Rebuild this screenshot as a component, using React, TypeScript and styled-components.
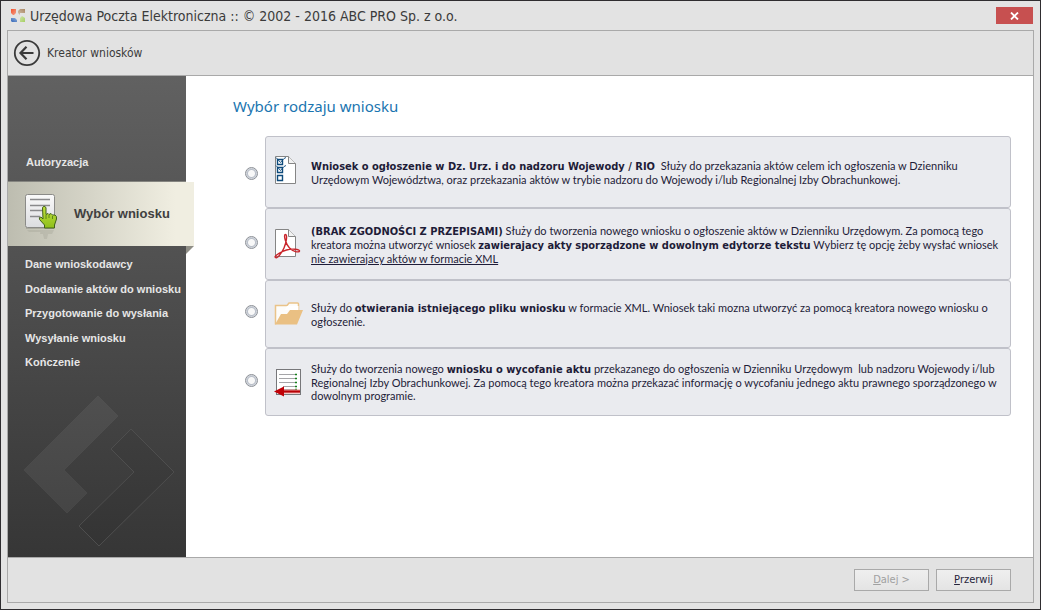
import React, { useState } from "react";
import type { ReactNode } from "react";
import styled, { createGlobalStyle } from "styled-components";

const ui = `"DejaVu Sans Condensed", Tahoma, sans-serif`;

const GlobalStyle = createGlobalStyle`
  * { box-sizing: border-box; }
  html, body, #root { height: 100%; margin: 0; }
  body { font-family: ${ui}; color: #3b3b3b; background: #e3e3e3; }
`;

const Window = styled.div`
  display: flex;
  flex-direction: column;
  min-height: 100%;
  padding: 0 6px 6px;
  border: 1px solid #2f2d30;
  background: #e3e3e3;
`;

const TitleBar = styled.header`
  display: flex;
  align-items: center;
  gap: 5px;
  height: 29px;
  padding-left: 4px;
`;

const WindowTitle = styled.h1`
  flex: 1;
  margin: 0;
  font-size: 14px;
  font-weight: normal;
  line-height: 20px;
`;

const CloseButton = styled.button`
  display: flex;
  align-items: center;
  justify-content: center;
  width: 37px;
  height: 17px;
  margin-right: 1px;
  padding: 0;
  border: 0;
  background: #c75050;
`;

const Frame = styled.div`
  display: flex;
  flex: 1;
  flex-direction: column;
  border: 1px solid #a9a9a9;
`;

const WizardHeader = styled.div`
  display: flex;
  align-items: center;
  gap: 6px;
  height: 45px;
  padding-left: 5px;
  border-bottom: 1px solid #a9a9a9;
  background: #e2e2e2;
  font-size: 12px;
`;

const BackButton = styled.button`
  width: 28px;
  height: 28px;
  padding: 0;
  border: 0;
  background: none;
  svg { display: block; }
`;

const Body = styled.div`
  display: flex;
  flex: 1;
  background: #fff;
`;

const Sidebar = styled.nav`
  position: relative;
  display: flex;
  flex-direction: column;
  flex: none;
  width: 178px;
  background: linear-gradient(#616161, #363636);
  color: #e6e6e6;
  font: bold 11px/14px "Liberation Sans", Arial, sans-serif;
`;

const DoneStep = styled.div`
  height: 106px;
  padding: 79px 0 0 18px;
  border-bottom: 1px solid #858580;
`;

const ActiveStep = styled.div`
  position: relative;
  display: flex;
  align-items: center;
  gap: 10px;
  width: 186px;
  height: 64px;
  padding-left: 16px;
  background: linear-gradient(90deg, #bdbdb0, #d6d5c8 45%, #f0eee1 90%);
  color: #404040;
  font-size: 13px;

  &::after {
    content: "";
    position: absolute;
    top: 100%;
    right: 0;
    border-top: 8px solid #8f8e86;
    border-right: 8px solid transparent;
  }
`;

const Steps = styled.ul`
  display: flex;
  flex-direction: column;
  justify-content: space-between;
  height: 112px;
  margin: 11px 0 0;
  padding: 0 0 0 17px;
  list-style: none;
  white-space: nowrap;
`;

const Watermark = styled.svg`
  margin: 26px 0 10px 15px;
`;

const Main = styled.main`
  flex: 1;
  padding: 20px 22px 0 47px;
`;

const Heading = styled.h2`
  margin: 0 0 20px;
  color: #1a75b0;
  font: normal 15px/20px "Noto Sans", "Segoe UI", sans-serif;
`;

const Choices = styled.div`
  display: flex;
`;

const Radios = styled.div`
  display: flex;
  flex-direction: column;
  flex: none;
  gap: 56px;
  width: 32px;
  padding: 31px 0 0 12px;
`;

const Radio = styled.input`
  appearance: none;
  width: 13px;
  height: 13px;
  margin: 0;
  border: 1px solid #8d9197;
  border-radius: 50%;
  background: radial-gradient(#f8f8f8 0 3px, #b9bfc9 4px, #e8eaee 6px);
  &:checked { background: radial-gradient(#245b88 0 3px, #b9bfc9 4px, #e8eaee 6px); }
`;

const Cards = styled.div`
  flex: 1;
`;

const Card = styled.label<{ $compact?: boolean }>`
  display: flex;
  align-items: center;
  gap: 5px;
  min-height: ${(p) => (p.$compact ? 68 : 72)}px;
  padding-left: 8px;
  border: 1px solid #c0c1c9;
  border-radius: 3px;
  background: #eaebef;
  color: #1e1c38;
  font: 11px/13px Lato, Tahoma, sans-serif;

  svg { flex: none; }
  strong { font-family: ${ui}; }
`;

const Footer = styled.footer`
  display: flex;
  align-items: center;
  justify-content: flex-end;
  gap: 7px;
  height: 45px;
  padding-right: 22px;
  border-top: 1px solid #a9a9a9;
  background: #e2e2e2;
`;

const FooterButton = styled.button`
  width: 75px;
  height: 22px;
  padding: 0;
  border: 1px solid #a9a9a9;
  background: linear-gradient(#efefef, #e4e4e4);
  color: #26243a;
  font: 11px/20px ${ui};
  &:disabled { color: #a0a0a0; }
`;

const AppLogo = () => (
  <svg width="14" height="14" viewBox="0 0 14 14" aria-hidden="true">
    <defs>
      <linearGradient id="lr" x2="1" y2="1"><stop stopColor="#f4502c" /><stop offset="1" stopColor="#f2a088" /></linearGradient>
      <linearGradient id="lt" x1="1" x2="0" y2="1"><stop stopColor="#a98662" /><stop offset="1" stopColor="#d3c2ae" /></linearGradient>
      <linearGradient id="lb" y1="1" x2="1" y2="0"><stop stopColor="#3467b8" /><stop offset="1" stopColor="#8fadd9" /></linearGradient>
      <linearGradient id="lg" x1="1" y1="1" x2="0" y2="0"><stop stopColor="#a5cf62" /><stop offset="1" stopColor="#cfe3a8" /></linearGradient>
    </defs>
    <path d="M0 0h5v4L3 6H2L0 4z" fill="url(#lr)" />
    <path d="M7 2l2-2h5v4H9v2L7 4z" fill="url(#lt)" />
    <path d="M0 9h4l2 2v2H1L0 12z" fill="url(#lb)" />
    <path d="M9 9l2-2 3 2v4H9z" fill="url(#lg)" />
  </svg>
);

const ActiveIcon = () => (
  <svg width="40" height="52" viewBox="0 0 40 52" aria-hidden="true">
    <defs>
      <linearGradient id="paper" x2="0" y2="1"><stop stopColor="#fafafa" /><stop offset="1" stopColor="#dcdde0" /></linearGradient>
      <linearGradient id="hand" x2="0" y2="1"><stop stopColor="#bfe03c" /><stop offset="1" stopColor="#8fbf1c" /></linearGradient>
    </defs>
    <path d="M2 41h28v-2H2z" fill="#85857a" opacity=".4" />
    <path d="M3 42h24l-2 2H5zM17 42h13l-2 4h-4l-1 5h-3l-1-5h-3z" fill="#8d8d80" opacity=".22" />
    <rect x="1.500" y="6.500" width="29" height="33" rx="2" fill="url(#paper)" stroke="#8b8b88" />
    <path d="M6 11.500h20M6 17.500h20M6 22.500h14M6 28.500h10" stroke="#8a8a8c" strokeWidth="1.500" />
    <path
      d="M18.500 19.500q1.500-2.500 3.500 0v7l2-1 1 1 2-1 1.500 1.500h2.500q2 1 1.500 4l-2 6v3H20.500v-3l-5-5.500q-1-2.500 1.500-2.500l2 2z"
      fill="url(#hand)" stroke="#40601a" strokeLinejoin="round"
    />
    <path d="M22 27v4M25 27v3M28.500 28v3" stroke="#5d8418" />
  </svg>
);

const ChecklistIcon = () => (
  <svg width="32" height="32" viewBox="0 0 32 32" aria-hidden="true">
    <path d="M1.500.500h13l7 7v20h-20z" fill="#fff" stroke="#858585" />
    <path d="M14.500.500v7h7" fill="#f2f2f2" stroke="#858585" />
    <g fill="#fff" stroke="#0e4a7b">
      <path d="M3.500 3.500h5v5h-5zM3.500 11.500h5v5h-5zM3.500 19.500h5v5h-5z" strokeWidth="1.400" />
      <path d="M2 1.500l4.500 5L10 2.500l2-1M2 9.500l4.500 5 3.500-4 2-1" fill="none" strokeWidth=".9" />
    </g>
  </svg>
);

const PdfIcon = () => (
  <svg width="32" height="32" viewBox="0 0 32 32" aria-hidden="true">
    <path d="M1.500 1.500h13l7 7v20h-20z" fill="#fff" stroke="#858585" />
    <path d="M14.500 1.500v7h7" fill="#f2f2f2" stroke="#858585" />
    <path
      d="M11.500 6.500c-2.500 0 .500 10 4 13.500s9.500 5 10 3-8-2.500-13-1S1.500 27 1 29c1.500 3 6.500-3.500 9-9s3.500-13.500 1.500-13.500z"
      fill="none" stroke="#c9252b" strokeWidth="1.400" strokeLinejoin="round"
    />
  </svg>
);

const FolderIcon = () => (
  <svg width="32" height="32" viewBox="0 0 32 32" aria-hidden="true">
    <path d="M1.500 26.500v-19H13l2-2.500h8.500q1 0 1 1v6" fill="#fdfcfa" stroke="#eac389" strokeWidth="1.500" />
    <path d="M24.500 12V8H13l-2 4z" fill="#fff" />
    <path d="M1 26.500L7 16h6l3-4h13l-6 14.500z" fill="#eac083" />
  </svg>
);

const WithdrawIcon = () => (
  <svg width="32" height="32" viewBox="0 0 32 32" aria-hidden="true">
    <rect x="2.500" y="3.500" width="24" height="25" fill="#fff" stroke="#77777a" />
    <path d="M5 8.500h16M5 12.500h16M5 16.500h16M9 20.500h12M9 23.500h12" stroke="#a5a5a8" />
    <path d="M21 8.500h2M21 12.500h2M21 16.500h2M21 20.500h2M21 23.500h2" stroke="#16801c" strokeWidth="1.300" />
    <path d="M8 25.500h18" stroke="#e89494" strokeWidth="4" />
    <path d="M9 25.500h17" stroke="#b80006" strokeWidth="2" />
    <path d="M0 25.500l10-5v10z" fill="#c00006" />
  </svg>
);

const options: { id: string; compact?: boolean; icon: ReactNode; text: ReactNode }[] = [
  {
    id: "ogloszenie",
    icon: <ChecklistIcon />,
    text: (
      <>
        <strong>Wniosek o ogłoszenie w Dz. Urz. i do nadzoru Wojewody / RIO</strong>
        {" \u00a0"}Służy do przekazania aktów celem ich ogłoszenia w Dzienniku
        <br />
        Urzędowym Województwa, oraz przekazania aktów w trybie nadzoru do Wojewody i/lub Regionalnej Izby Obrachunkowej.
      </>
    ),
  },
  {
    id: "pdf",
    icon: <PdfIcon />,
    text: (
      <>
        <strong>(BRAK ZGODNOŚCI Z PRZEPISAMI)</strong> Służy do tworzenia nowego wniosku o ogłoszenie aktów w Dzienniku Urzędowym. Za pomocą tego
        <br />
        kreatora można utworzyć wniosek <strong>zawierajacy akty sporządzone w dowolnym edytorze tekstu</strong> Wybierz tę opcję żeby wysłać wniosek
        <br />
        <u>nie zawierajacy aktów w formacie XML</u>
      </>
    ),
  },
  {
    id: "otwieranie",
    compact: true,
    icon: <FolderIcon />,
    text: (
      <>
        Służy do <strong>otwierania istniejącego pliku wniosku</strong> w formacie XML. Wniosek taki mozna utworzyć za pomocą kreatora nowego wniosku o
        <br />
        ogłoszenie.
      </>
    ),
  },
  {
    id: "wycofanie",
    compact: true,
    icon: <WithdrawIcon />,
    text: (
      <>
        Służy do tworzenia nowego <strong>wniosku o wycofanie aktu</strong> przekazanego do ogłoszenia w Dzienniku Urzędowym{" \u00a0"}lub nadzoru Wojewody i/lub
        <br />
        Regionalnej Izby Obrachunkowej. Za pomocą tego kreatora można przekazać informację o wycofaniu jednego aktu prawnego sporządzonego w
        <br />
        dowolnym programie.
      </>
    ),
  },
];

const nextSteps = ["Dane wnioskodawcy", "Dodawanie aktów do wniosku", "Przygotowanie do wysłania", "Wysyłanie wniosku", "Kończenie"];

export default function App() {
  const [selected, setSelected] = useState<string | null>(null);
  return (
    <>
      <GlobalStyle />
      <Window>
        <TitleBar>
          <AppLogo />
          <WindowTitle>Urzędowa Poczta Elektroniczna :: © 2002 - 2016 ABC PRO Sp. z o.o.</WindowTitle>
          <CloseButton aria-label="Zamknij">
            <svg width="9" height="8" viewBox="0 0 9 8">
              <path d="M1 .500l7 7M8 .500l-7 7" stroke="#fff" strokeWidth="1.800" />
            </svg>
          </CloseButton>
        </TitleBar>
        <Frame>
          <WizardHeader>
            <BackButton aria-label="Wstecz">
              <svg width="28" height="28" viewBox="0 0 28 28">
                <circle cx="14" cy="14" r="12.200" fill="none" stroke="#3a3a3a" strokeWidth="1.800" />
                <path d="M20.500 14H8M13.500 7.800L7.500 14l6 6.200" fill="none" stroke="#3a3a3a" strokeWidth="2.200" />
              </svg>
            </BackButton>
            <span>Kreator wniosków</span>
          </WizardHeader>
          <Body>
            <Sidebar>
              <DoneStep>Autoryzacja</DoneStep>
              <ActiveStep>
                <ActiveIcon />
                Wybór wniosku
              </ActiveStep>
              <Steps>
                {nextSteps.map((step) => (
                  <li key={step}>{step}</li>
                ))}
              </Steps>
              <Watermark width="152" height="152" viewBox="0 0 152 152" aria-hidden="true">
                <path d="M75 1l20 20-54 54 23 23-20 20L1 75z" fill="#fff" fillOpacity=".06" stroke="#fff" strokeOpacity=".04" />
                <path d="M108 34l43 43-75 74-20-20 55-54-23-23z" fill="#000" fillOpacity=".04" stroke="#4e4e4e" />
              </Watermark>
            </Sidebar>
            <Main>
              <Heading>Wybór rodzaju wniosku</Heading>
              <Choices>
                <Radios>
                  {options.map((o) => (
                    <Radio key={o.id} id={o.id} type="radio" name="rodzaj" checked={selected === o.id} onChange={() => setSelected(o.id)} />
                  ))}
                </Radios>
                <Cards>
                  {options.map((o) => (
                    <Card key={o.id} htmlFor={o.id} $compact={o.compact}>
                      {o.icon}
                      <span>{o.text}</span>
                    </Card>
                  ))}
                </Cards>
              </Choices>
            </Main>
          </Body>
          <Footer>
            <FooterButton disabled>
              <u>D</u>alej &gt;
            </FooterButton>
            <FooterButton>
              <u>P</u>rzerwij
            </FooterButton>
          </Footer>
        </Frame>
      </Window>
    </>
  );
}
